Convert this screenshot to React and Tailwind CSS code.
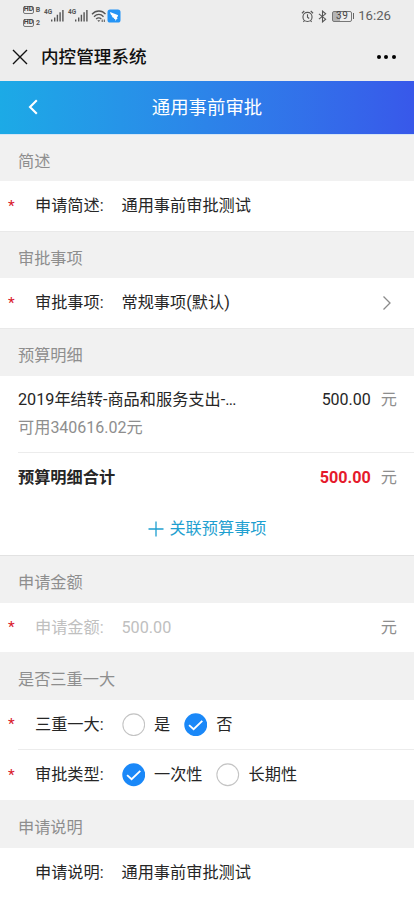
import React, { useState } from 'react';
import clsx from 'clsx';

const SectionTitle = ({ children, className = 'h-12' }) => (
  <div className={clsx('flex items-center bg-[#f1f1f1] px-[18px] pt-[7px] text-[#8e8e8e]', className)}>
    {children}
  </div>
);

const FormRow = ({ label, required = true, disabled = false, className = 'h-[50px]', children }) => (
  <div className={clsx('flex items-center bg-white pr-[17px]', className)}>
    <span className="w-[35px] pb-px pl-2 text-[15.5px] text-[#d9182c]">{required ? '*' : ''}</span>
    <span className={clsx('w-[86.5px] whitespace-nowrap', disabled && 'text-[#c0c0c0]')}>{label}:</span>
    {children}
  </div>
);

const Radio = ({ label, checked, onClick }) => (
  <button type="button" onClick={onClick} className="flex items-center">
    <svg viewBox="0 0 24 24" className="mr-[9px] h-[23.5px] w-[23.5px]">
      {checked ? (
        <>
          <circle cx="12" cy="12" r="11.7" fill="#1a88f8" />
          <path d="M5.2 12.4l4.600 4.200 8.900-8.500" fill="none" stroke="#fff" strokeWidth="1.9" />
        </>
      ) : (
        <circle cx="12" cy="12" r="11.1" fill="#fff" stroke="#c4c4c4" strokeWidth="1.1" />
      )}
    </svg>
    {label}
  </button>
);

const HdBadge = ({ sim }) => (
  <div className="flex items-end gap-[2px] leading-none">
    <span className="flex h-2 w-[11px] items-center justify-center rounded-[2px] border border-[#777] text-[7px] font-bold leading-none text-[#444]">
      HD
    </span>
    <span className="flex h-[6px] w-1 items-center justify-center text-[7px] font-bold leading-none text-[#555]">
      {sim}
    </span>
  </div>
);

const Signal = () => (
  <div className="relative h-4 w-5">
    <span className="absolute left-0 top-px text-[6.5px] font-bold leading-none text-[#555]">4G</span>
    <svg viewBox="0 0 20 16" className="h-4 w-5" stroke="#555" strokeWidth="1.4">
      <path d="M7.700 13.500v-2M10.700 13.500v-4M13.400 13.500V6.800M16.100 13.500V4.300M18.900 13.500V2" />
    </svg>
  </div>
);

const StatusBar = () => (
  <div className="flex h-8 items-center pl-[23px] pr-[23px] text-[#555]">
    <div className="flex flex-col gap-[5px]">
      <HdBadge sim="B" />
      <HdBadge sim="2" />
    </div>
    <div className="ml-[4px] flex gap-1">
      <Signal />
      <Signal />
    </div>
    <svg viewBox="0 0 16 14" className="ml-[3px] h-[14px] w-4" fill="none" stroke="#555" strokeWidth="1.3">
      <path d="M1 5.200c4-4.300 10-4.300 13.500 0M3 7.700c3-3 6.800-3 9.500 0M5.100 10c1.700-1.600 3.700-1.600 5.200 0" />
      <path d="M6.300 11.200h3L7.800 13z" fill="#555" stroke="none" />
      <path d="M11.200 13v-2.500M13.300 10.500V13" strokeWidth="1" />
    </svg>
    <svg viewBox="0 0 14 14" className="h-[14px] w-[14px]">
      <rect x="0.5" y="0.5" width="13" height="13" rx="2.6" fill="#2494f5" />
      <path d="M3 3l7.700 3.100c.4.2.4.5.2.8L9.800 9h1L8 12l.3-2H6.800l.5-1C5.700 8.700 5 8 4.700 7.200l1 .1C4.300 6.500 3.400 5.200 3 3z" fill="#fff" />
    </svg>
    <div className="flex-1" />
    <svg viewBox="0 0 14 14" className="h-[13px] w-[13px]" fill="none" stroke="#555" strokeWidth="1.2">
      <circle cx="7" cy="7.5" r="4.9" />
      <path d="M7 4.700v3l1.800 1.500M1 3.500l2.500-2.400M13 3.500l-2.500-2.400M3.800 11.300l-1.200 1.500M10.200 11.300l1.200 1.500" />
    </svg>
    <svg viewBox="0 0 10 14" className="ml-1 h-[13px] w-[9px]" fill="none" stroke="#555" strokeWidth="1.2">
      <path d="M1 4l7.500 6L5 13V1l3.500 3L1 10" />
    </svg>
    <div className="ml-[5px] flex h-[11px] w-5 items-center justify-center rounded-[2px] border border-[#777] bg-linear-to-r from-[#b5b5b5] from-40% to-transparent to-40% text-[10px] leading-none tracking-[0.5px] text-[#444]">
      39
    </div>
    <span className="ml-px h-[6px] w-px bg-[#666]" />
    <span className="ml-1 text-[13.2px] leading-none text-[#606060]">16:26</span>
  </div>
);

export default function App() {
  const [major, setMajor] = useState(false);
  const [type, setType] = useState('once');

  return (
    <div className="flex h-[900px] w-[414px] flex-col overflow-hidden bg-white font-[Roboto,'Noto_Sans_CJK_SC',sans-serif] text-[16.2px] leading-6 text-[#262626]">
      {/* Status bar and webview title */}
      <div className="h-[81px] shrink-0 bg-[#ededed]">
        <StatusBar />
        <div className="flex h-[49px] items-center pl-3 pr-[18px]">
          <svg viewBox="0 0 16 16" className="h-4 w-4" fill="none" stroke="#111" strokeWidth="1.4">
            <path d="M1 1l14 14M15 1L1 15" />
          </svg>
          <span className="ml-[13px] text-[17.6px] font-medium text-[#111]">内控管理系统</span>
          <div className="ml-auto flex gap-[3.6px]">
            <span className="h-1 w-1 rounded-full bg-black" />
            <span className="h-1 w-1 rounded-full bg-black" />
            <span className="h-1 w-1 rounded-full bg-black" />
          </div>
        </div>
      </div>

      {/* Page header */}
      <div className="flex h-[54px] shrink-0 items-center border-b border-[#d5e5f5] bg-linear-to-r from-[#1caae6] to-[#3858ea] text-white">
        <svg viewBox="0 0 10 16" className="mb-[2px] ml-7 h-4 w-[10px]" fill="none" stroke="#fff" strokeWidth="2.1">
          <path d="M8.800 1.200L2 8l6.800 6.800" />
        </svg>
        <span className="flex-1 pr-[38px] text-center text-[18.4px]">通用事前审批</span>
      </div>

      <SectionTitle className="h-[46px]">简述</SectionTitle>
      <FormRow label="申请简述">通用事前审批测试</FormRow>

      <SectionTitle className="h-[47px] border-t border-[#e9e9e9]">审批事项</SectionTitle>
      <FormRow label="审批事项">
        常规事项(默认)
        <svg viewBox="0 0 10 16" className="ml-auto mr-[5px] h-4 w-[10px]" fill="none" stroke="#8a8a8a" strokeWidth="1.3">
          <path d="M1.500 1.500L8 8l-6.500 6.500" />
        </svg>
      </FormRow>

      <SectionTitle className="h-12 border-t border-[#e9e9e9]">预算明细</SectionTitle>
      <div className="flex h-[76px] justify-between pl-[18px] pr-[17px] pt-3">
        <div>
          <div>2019年结转-商品和服务支出-<span className="tracking-[-0.8px]">...</span></div>
          <div className="mt-1 text-[#8e8e8e]">可用<span className="text-[16px]">340616.02</span>元</div>
        </div>
        <div className="flex gap-[10px]">
          <span className="text-[16px]">500.00</span>
          <span className="text-[#8e8e8e]">元</span>
        </div>
      </div>
      <div className="ml-[18px] flex h-[51px] items-center justify-between border-t border-[#ececec] pr-[17px]">
        <span className="font-bold">预算明细合计</span>
        <div className="flex gap-[10px]">
          <span className="font-bold text-[#e51a2b]">500.00</span>
          <span className="text-[#8e8e8e]">元</span>
        </div>
      </div>
      <button type="button" className="flex h-[52px] items-center justify-center gap-[5px] pl-px text-[#1e9fd0]">
        <svg viewBox="0 0 16 16" className="h-4 w-4" stroke="currentColor" strokeWidth="1.3">
          <path d="M8 .5v15M.5 8h15" />
        </svg>
        关联预算事项
      </button>

      <SectionTitle className="h-12 border-t border-[#e2e2e2]">申请金额</SectionTitle>
      <FormRow label="申请金额" disabled className="h-[49px]">
        <span className="text-[#c0c0c0]">500.00</span>
        <span className="ml-auto text-[#8e8e8e]">元</span>
      </FormRow>

      <SectionTitle>是否三重一大</SectionTitle>
      <FormRow label="三重一大" className="h-[49px]">
        <div className="flex gap-[13.5px]">
          <Radio label="是" checked={major} onClick={() => setMajor(true)} />
          <Radio label="否" checked={!major} onClick={() => setMajor(false)} />
        </div>
      </FormRow>
      <div className="ml-[18px] h-px bg-[#ececec]" />
      <FormRow label="审批类型">
        <div className="flex gap-[13.5px]">
          <Radio label="一次性" checked={type === 'once'} onClick={() => setType('once')} />
          <Radio label="长期性" checked={type === 'long'} onClick={() => setType('long')} />
        </div>
      </FormRow>

      <SectionTitle>申请说明</SectionTitle>
      <FormRow label="申请说明" required={false}>通用事前审批测试</FormRow>
    </div>
  );
}
